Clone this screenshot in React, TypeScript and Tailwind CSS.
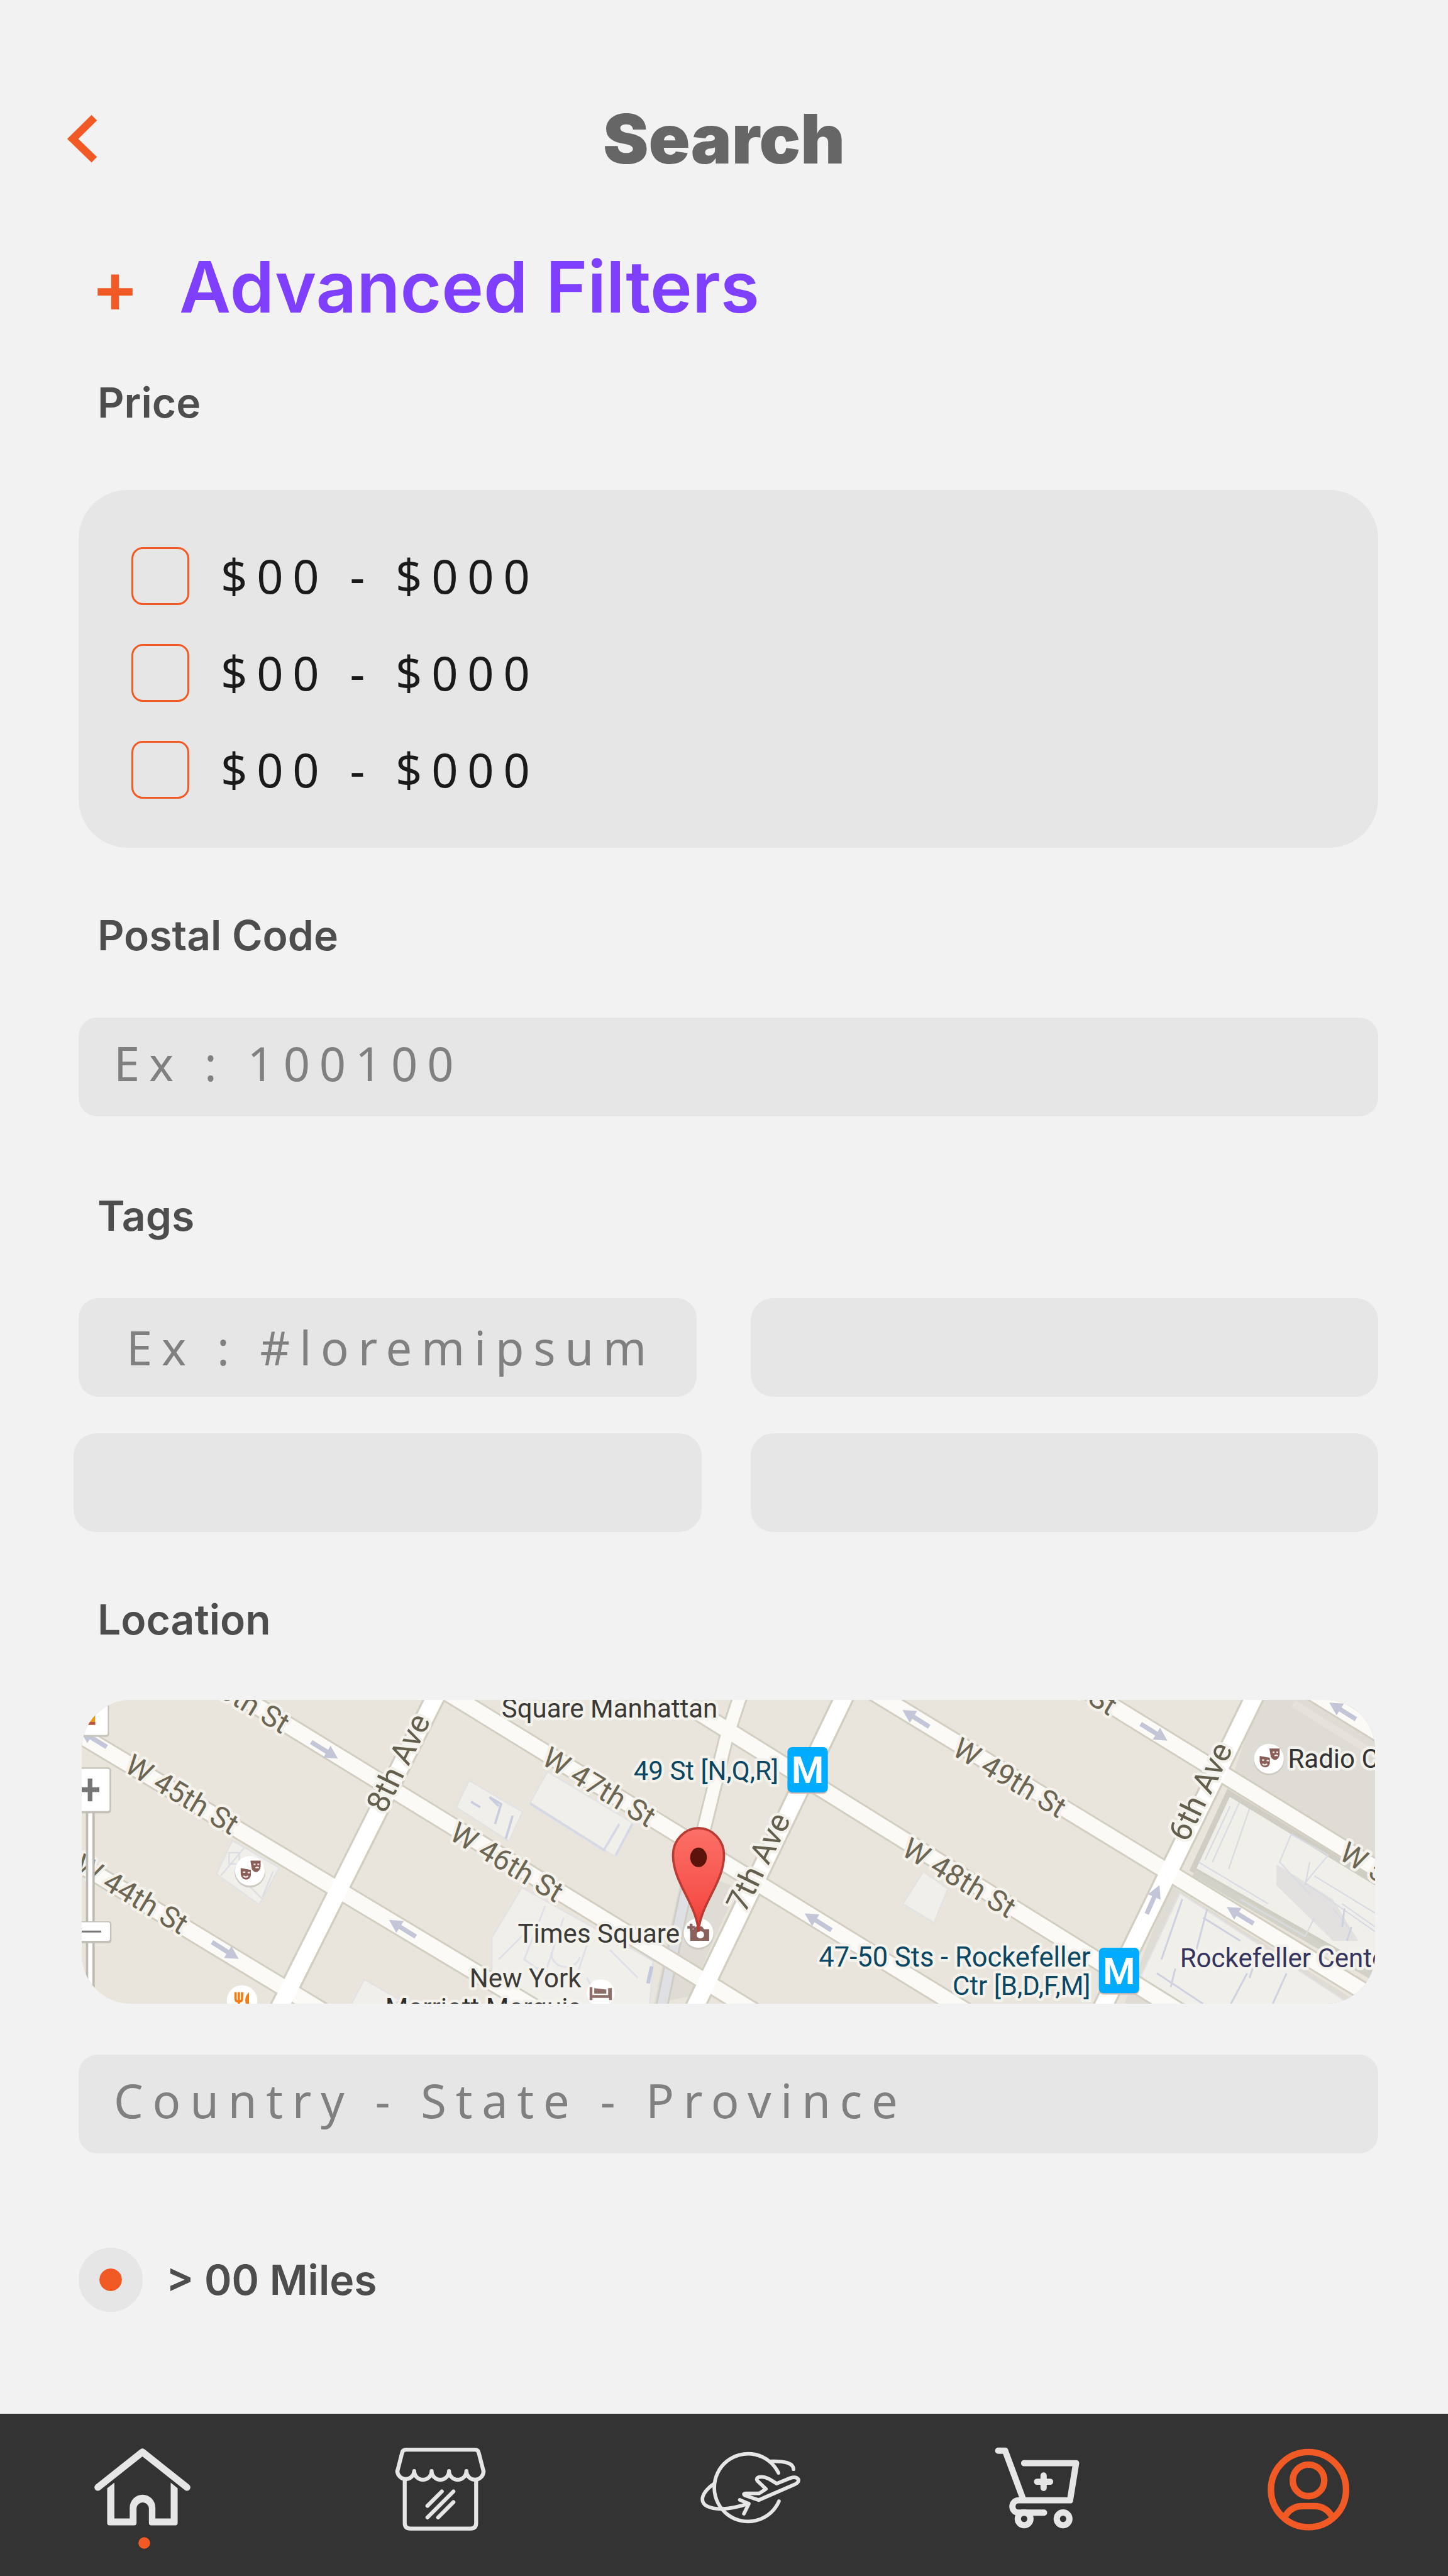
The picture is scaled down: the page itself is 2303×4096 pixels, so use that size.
import React from "react";

const heading = "font-['Inter',sans-serif]";
const body = "font-['Noto_Sans','Open_Sans',sans-serif]";
const field =
  "block h-[157px] w-full bg-[#e6e6e6] text-[74px] tracking-[0.2em] text-[#1a1a1a] placeholder:text-[#808080] placeholder:opacity-100 outline-none";

function FieldLabel({ htmlFor, children }: { htmlFor?: string; children: React.ReactNode }) {
  const cls = `${heading} block pl-[30px] text-[66px] leading-[80px] font-semibold text-[#4d4d4d]`;
  return htmlFor ? (
    <label htmlFor={htmlFor} className={cls}>
      {children}
    </label>
  ) : (
    <h3 className={cls}>{children}</h3>
  );
}

function PriceOption({ id, label }: { id: string; label: string }) {
  return (
    <div className="flex h-[92px] items-center gap-[50px]">
      <input
        id={id}
        type="checkbox"
        className="size-[92px] appearance-none rounded-[18px] border-[3px] border-[#f15a24] checked:bg-[#f15a24]"
      />
      <label htmlFor={id} className={`${body} text-[74px] leading-[92px] tracking-[0.2em] whitespace-pre text-[#1a1a1a]`}>
        {label}
      </label>
    </div>
  );
}

const streets = [
  [-20, 345, 520, 672],
  [-20, 66, 980, 666],
  [300, -34, 1460, 678],
  [780, -21, 1910, 673],
  [1240, -30, 2400, 692],
  [1680, -34, 2830, 668],
  [2140, -38, 2830, 387],
  [2620, -38, 2830, 91],
];

const avenues = [
  [770, -20, 421, 676],
  [1652, -20, 1317, 676],
  [2537, -20, 2197, 676],
];

const arrows = [
  [524, 109, 32],
  [310, 541, 32],
  [692, 493, 212],
  [25, 84, 212],
  [1800, 40, 212],
  [1589, 479, 212],
  [2314, 70, 32],
  [2500, 465, 212],
  [2721, 24, 212],
  [2312, 431, -66],
];

const streetNames = [
  { text: "W 45th St", x: 89, y: 153 },
  { text: "W 44th St", x: -20, y: 368 },
  { text: "W 46th St", x: 790, y: 299 },
  { text: "W 47th St", x: 989, y: 137 },
  { text: "W 48th St", x: 1766, y: 333 },
  { text: "W 49th St", x: 1875, y: 117 },
  { text: "W 46th St", x: 199, y: -65 },
  { text: "W 50th St", x: 1985, y: -104 },
  { text: "W 50th St", x: 2710, y: 342 },
];

const avenueNames = [
  { text: "8th Ave", x: 704, y: 146 },
  { text: "7th Ave", x: 1481, y: 360 },
  { text: "6th Ave", x: 2435, y: 208 },
];

const places = [
  { text: "Square Manhattan", x: 906, y: 38, fill: "#3c3a36" },
  { text: "Times Square", x: 941, y: 524, fill: "#3c3a36" },
  { text: "New York", x: 837, y: 621, fill: "#3c3a36" },
  { text: "Marriott Marquis", x: 655, y: 684, fill: "#2b2a27" },
  { text: "Radio City", x: 2603, y: 147, fill: "#333333" },
  { text: "49 St [N,Q,R]", x: 1191, y: 172, fill: "#0b4763" },
  { text: "Rockefeller Center", x: 2370, y: 577, fill: "#34345f" },
];

function Metro({ x, y }: { x: number; y: number }) {
  return (
    <g>
      <rect x={x} y={y + 3} width="87" height="98" rx="10" fill="#d9b9ae" />
      <rect x={x} y={y} width="87" height="98" rx="10" fill="#00acff" />
      <text x={x + 43.5} y={y + 78} textAnchor="middle" fontSize="80" fontWeight="600" fill="#fff">
        M
      </text>
    </g>
  );
}

function Masks({ x, y }: { x: number; y: number }) {
  return (
    <g transform={`translate(${x} ${y})`}>
      <circle cy="3" r="33" fill="#cfcbc2" />
      <circle r="32" fill="#fff" />
      <path d="M1-22H23V-9Q22 1 13 3Q7 2 4-4" fill="#8a5f58" />
      <path d="M-20-6L2-2V10Q0 19-9 19Q-19 17-20 6Z" fill="#8a5f58" />
      <path d="M-15 3h5m5 1h5M-14 11q5 5 10 0M8-14h4m4 0h4M12-6q4-3 7 0" stroke="#f1e9e6" strokeWidth="3" fill="none" />
    </g>
  );
}

function MapView() {
  return (
    <svg
      role="img"
      aria-label="Map of Times Square"
      viewBox="0 0 2791 656"
      preserveAspectRatio="xMidYMid slice"
      className="block h-[483px] w-full rounded-[78px] bg-[#e9e5dc] font-['Roboto',sans-serif]"
    >
      <defs>
        <linearGradient id="pin" x1="0" y1="0" x2="0" y2="1">
          <stop offset="0" stopColor="#fb7067" />
          <stop offset="0.7" stopColor="#f6504a" />
          <stop offset="1" stopColor="#e8382f" />
        </linearGradient>
      </defs>
      <rect width="2791" height="656" fill="#e9e5dc" />

      <g fill="#dfdbd5">
        <path d="M2540 0H2650L2791 90V345L2485 160Z" />
        <path d="M1345 380L1415 405L1310 640L1235 656L1290 400Z" />
        <path d="M2350 400L2760 656H2250Z" />
      </g>
      <path d="M2615 8L2791 118" stroke="#e6e2db" strokeWidth="16" />

      <g fill="#f1efea" stroke="#e2e2e4" strokeWidth="3">
        <path d="M325 304L426 362L383 442L291 376Z" />
        <path d="M836 174L951 242L922 305L808 232Z" />
        <path d="M1005 155L1188 265L1152 339L968 222Z" />
        <path d="M950 405L1234 564L1225 660H885V513Z" />
        <path d="M1816 371L1869 408L1839 481L1772 440Z" />
        <path d="M610 603L690 650L640 660H580Z" />
        <path d="M2370 417L2745 662H2345L2286 596Z" />
      </g>
      <path d="M2475 201L2810 405V600L2398 366Z" fill="#f1efea" stroke="#d0cec4" strokeWidth="12" />
      <path d="M2400 374L2800 606" stroke="#d3d2c8" strokeWidth="14" />
      <path d="M2578 355L2700 430L2755 520L2700 520L2578 400Z" fill="#e2e1df" />
      <path d="M860 232L840 220M900 230L880 210L905 225L892 268M930 250L915 300" stroke="#c9cde0" strokeWidth="5" fill="none" />
      <path d="M1188 268L1152 336M1160 268L1128 322M968 224L1130 326" stroke="#d5d8e5" strokeWidth="5" fill="none" />
      <path d="M318 330h22v24h-22zM413 370L390 425M345 385L390 430M300 380L350 320" stroke="#dcdde4" strokeWidth="3" fill="none" />
      <path
        d="M1000 445L955 560L1010 600M1040 470L1000 590M1015 545a30 26 0 1 0 60 10M960 500L900 560M1100 500L1060 620M1140 540L1200 600M1234 564L1222 610M1090 600L1120 656"
        stroke="#dfe0e8"
        strokeWidth="4"
        fill="none"
      />
      <path d="M1230 575L1222 612" stroke="#c3c8dc" strokeWidth="8" />
      <path
        d="M2520 235L2475 365M2498 222L2440 350M2478 230L2424 345M2410 350L2560 440M2610 290L2585 350L2650 420M2610 290L2690 335L2640 395L2791 500M2660 380L2791 460M2700 450L2740 500M2720 440L2791 490M2500 430L2640 510L2660 470M2640 400L2650 350"
        stroke="#d9dbe3"
        strokeWidth="3"
        fill="none"
      />
      <path
        d="M2429 450L2400 560M2375 430L2330 560M2515 590L2480 656M2360 580L2350 620M2320 590L2420 656M2450 440L2640 570M2600 590L2570 656M2420 470L2500 520M2540 540L2520 600M2725 450L2720 490M2740 490L2730 520"
        stroke="#cdd1e0"
        strokeWidth="4"
        fill="none"
      />

      <path d="M1344 265L1300 430L1252 660" stroke="#cfcdc6" strokeWidth="28" fill="none" />
      <path d="M1344 265L1300 430L1252 660" stroke="#dfe0e4" strokeWidth="20" fill="none" />

      <g stroke="#d2cec2">
        <path d="M1425-20L1390 86L1340 290" strokeWidth="34" fill="none" />
        {streets.map(([x1, y1, x2, y2], i) => (
          <line key={i} x1={x1} y1={y1} x2={x2} y2={y2} strokeWidth="41" />
        ))}
        {avenues.map(([x1, y1, x2, y2], i) => (
          <line key={i} x1={x1} y1={y1} x2={x2} y2={y2} strokeWidth="45" />
        ))}
      </g>
      <g stroke="#fbfaf7">
        <path d="M1425-20L1390 86L1340 290" strokeWidth="26" fill="none" />
        {streets.map(([x1, y1, x2, y2], i) => (
          <line key={i} x1={x1} y1={y1} x2={x2} y2={y2} strokeWidth="33" />
        ))}
      </g>
      <g stroke="#ffffff">
        {avenues.map(([x1, y1, x2, y2], i) => (
          <line key={i} x1={x1} y1={y1} x2={x2} y2={y2} strokeWidth="36" />
        ))}
      </g>

      {arrows.map(([x, y, r], i) => (
        <path
          key={i}
          d="M-34-5H6V-15L34 0L6 15V5H-34Z"
          transform={`translate(${x} ${y}) rotate(${r})`}
          fill="#c2c6d7"
        />
      ))}

      <g stroke="#f4f2ec" strokeWidth="12" strokeLinejoin="round" className="[paint-order:stroke]">
        {streetNames.map(({ text, x, y }, i) => (
          <text key={i} transform={`translate(${x} ${y}) rotate(31)`} fontSize="63" fill="#6b6552">
            {text}
          </text>
        ))}
        {avenueNames.map(({ text, x, y }) => (
          <text
            key={text}
            transform={`translate(${x} ${y}) rotate(-64)`}
            textAnchor="middle"
            fontSize="68"
            fill="#645e4c"
          >
            {text}
          </text>
        ))}
        {places.map(({ text, x, y, fill }) => (
          <text key={text} x={x} y={y} fontSize="57" fill={fill}>
            {text}
          </text>
        ))}
        <text x="2177" y="575" textAnchor="end" fontSize="59" fill="#0b4763">
          47-50 Sts - Rockefeller
        </text>
        <text x="2177" y="637" textAnchor="end" fontSize="57" fill="#0b4763">
          Ctr [B,D,F,M]
        </text>
      </g>

      <Metro x={1523} y={102} />
      <Metro x={2195} y={535} />
      <Masks x={363} y={369} />
      <Masks x={2562} y={127} />

      <circle cx="346" cy="649" r="33" fill="#fff" />
      <path d="M332 631v14q0 6 7 6v8M339 631v18M346 631v14q0 6-7 6" stroke="#f57c14" strokeWidth="5" fill="none" />
      <path d="M361 631v30h-5q-8-18 5-30z" fill="#f57c14" />

      <circle cx="1120" cy="633" r="30" fill="#fff" />
      <path d="M1096 620h6v17h34v-15h8v26h-6v-5h-36v5h-6zM1106 622l26 3v9h-26z" fill="#8d6e68" />

      <circle cx="1331" cy="506" r="33" fill="#cfcbc2" />
      <circle cx="1331" cy="503" r="32" fill="#fff" />
      <path d="M1313 495h8l4-6h14l4 6h11v25h-41z" fill="#8a625b" />
      <circle cx="1335" cy="507" r="8" fill="#fff" />
      <path d="M1315 483v16M1307 491h16" stroke="#8a625b" strokeWidth="6" />
      <path
        d="M1331 500C1327 440 1276 395 1276 335A55 58 0 0 1 1386 335C1386 395 1335 440 1331 500Z"
        fill="url(#pin)"
        stroke="#b83b34"
        strokeWidth="5"
      />
      <ellipse cx="1331" cy="340" rx="18" ry="21" fill="#5c130c" />

      <g>
        <rect x="-10" y="-10" width="69" height="90" rx="6" fill="#c9c6bd" />
        <rect x="-10" y="-10" width="66" height="86" rx="4" fill="#fff" />
        <rect x="10" y="30" width="19" height="24" fill="#e9960c" />
        <rect x="10" y="48" width="19" height="6" fill="#b8524a" />
        <rect x="9" y="240" width="19" height="420" fill="#bdbbb4" />
        <rect x="14" y="240" width="9" height="420" fill="#fff" />
        <rect x="-10" y="146" width="73" height="99" rx="6" fill="#c3c0b7" />
        <rect x="-10" y="149" width="70" height="91" rx="4" fill="#fff" />
        <path d="M0 194H38M18 170V219" stroke="#757575" strokeWidth="10" />
        <rect x="-10" y="478" width="74" height="47" rx="6" fill="#c3c0b7" />
        <rect x="-10" y="480" width="71" height="40" rx="4" fill="#fff" />
        <path d="M0 500H42" stroke="#757575" strokeWidth="4" />
      </g>
    </svg>
  );
}

const navIcon = "h-[177px] w-[177px]";

function NavLink({ label, children }: { label: string; children: React.ReactNode }) {
  return (
    <a href="#" aria-label={label} className="flex items-center justify-center">
      {children}
    </a>
  );
}

export default function App() {
  return (
    <div className="flex min-h-screen flex-col bg-[#f2f2f2]">
      <header className="grid grid-cols-[1fr_auto_1fr] items-center px-[107px] pt-[160px]">
        <button type="button" aria-label="Back" className="w-[48px]">
          <svg viewBox="145 244 66 104" className="h-[77px] w-[48px]" fill="none" stroke="#f15a24" strokeWidth="17">
            <path d="M204 250L157 296.500L204 342" />
          </svg>
        </button>
        <h1 className={`${heading} text-[109px] leading-[120px] font-black text-[#666666]`}>Search</h1>
      </header>

      <main className="flex-1 pr-[111px] pl-[125px]">
        <h2 className="mt-[120px] pl-[20px]">
          <button
            type="button"
            className={`${heading} flex items-center gap-[64px] text-[113px] leading-[112px] font-semibold text-[#7f3fff]`}
          >
            <span className="text-[#f15a24]">+</span>
            <span>Advanced Filters</span>
          </button>
        </h2>

        <section className="mt-[88px]">
          <FieldLabel>Price</FieldLabel>
          <div className="mt-[99px] flex flex-col gap-[62px] rounded-[78px] bg-[#e6e6e6] pt-[91px] pb-[78px] pl-[84px]">
            <PriceOption id="price-1" label="$00 - $000" />
            <PriceOption id="price-2" label="$00 - $000" />
            <PriceOption id="price-3" label="$00 - $000" />
          </div>
        </section>

        <section className="mt-[99px]">
          <FieldLabel htmlFor="postal">Postal Code</FieldLabel>
          <input
            id="postal"
            type="text"
            placeholder="Ex : 100100"
            className={`${field} ${body} mt-[91px] rounded-[30px] px-[56px] pb-[12px]`}
          />
        </section>

        <section className="mt-[118px]">
          <FieldLabel htmlFor="tag-1">Tags</FieldLabel>
          <div className="mt-[91px] -ml-[8px] grid grid-cols-2 gap-x-[78px] gap-y-[58px]">
            <div className="px-[8px]">
              <input
                id="tag-1"
                type="text"
                placeholder="Ex : #loremipsum"
                className={`${field} ${body} rounded-[32px] pl-[76px]`}
              />
            </div>
            <input type="text" aria-label="Tag 2" className={`${field} ${body} rounded-[36px] px-[56px]`} />
            <input type="text" aria-label="Tag 3" className={`${field} ${body} rounded-[36px] px-[56px]`} />
            <input type="text" aria-label="Tag 4" className={`${field} ${body} rounded-[36px] px-[56px]`} />
          </div>
        </section>

        <section className="mt-[99px]">
          <FieldLabel htmlFor="region">Location</FieldLabel>
          <div className="mt-[88px] px-[5px]">
            <MapView />
          </div>
          <input
            id="region"
            type="text"
            placeholder="Country - State - Province"
            className={`${field} ${body} mt-[81px] rounded-[30px] px-[56px] pb-[12px]`}
          />
          <div className="mt-[150px] flex items-center gap-[37px]">
            <input
              id="miles"
              type="radio"
              name="distance"
              defaultChecked
              className="size-[102px] appearance-none rounded-full border-[33px] border-[#e6e6e6] bg-clip-padding checked:bg-[#f15a24]"
            />
            <label htmlFor="miles" className={`${heading} text-[66px] leading-[80px] font-semibold text-[#4d4d4d]`}>
              &gt; 00 Miles
            </label>
          </div>
        </section>
      </main>

      <nav
        aria-label="Main"
        className="grid h-[258px] grid-cols-[452fr_496fr_490fr_422fr_443fr] items-center bg-[#333333]"
      >
        <NavLink label="Home">
          <svg viewBox="187 5264 240 240" className={navIcon}>
            <path
              d="M211 5367L307 5291L403 5367"
              fill="none"
              stroke="#e6e6e6"
              strokeWidth="15"
              strokeLinecap="round"
              strokeLinejoin="round"
            />
            <path
              d="M231 5369L246.600 5357V5434H279.600V5411a27.700 28 0 0 1 55.400 0V5434H368V5357L383 5369V5444q0 5-5 5H326q-5 0-5-5V5412a13.400 13.400 0 0 0-26.700 0V5444q0 5-5 5H236q-5 0-5-5z"
              fill="#e6e6e6"
            />
            <circle cx="311" cy="5487" r="12.500" fill="#f15a24" />
          </svg>
        </NavLink>
        <NavLink label="Shop">
          <svg
            viewBox="830 5264 240 240"
            className={navIcon}
            fill="none"
            stroke="#e6e6e6"
            strokeWidth="8.5"
            strokeLinecap="round"
            strokeLinejoin="round"
          >
            <path d="M857 5333L867.500 5292Q869 5286 876 5286H1024Q1031 5286 1032.500 5292L1043 5333" />
            <path d="M857 5332A18.300 18.600 0 0 0 893.500 5332A18.700 18.600 0 0 0 931 5332A18.700 18.600 0 0 0 968.500 5332A18.700 18.600 0 0 0 1006 5332A18.500 18.600 0 0 0 1043 5332" />
            <path d="M873 5353V5444Q873 5456 885 5456H1015Q1027 5456 1027 5444V5353" />
            <path d="M953 5376L922 5407M978 5376L922 5432M978 5399L945 5432" />
          </svg>
        </NavLink>
        <NavLink label="Travel">
          <svg
            viewBox="1499 5264 240 240"
            className={navIcon}
            fill="none"
            stroke="#e6e6e6"
            strokeWidth="7.8"
            strokeLinecap="round"
            strokeLinejoin="round"
          >
            <path d="M1680.600 5397A72.800 73 0 1 1 1679.500 5336" />
            <path d="M1664 5311C1692 5310 1712 5315 1712 5328" />
            <path d="M1541 5359C1526 5369 1515.500 5382 1515.500 5393C1515.500 5406 1531 5413.500 1555 5413.500C1578 5413 1598 5408 1615 5402" />
            <path d="M1596 5394L1615.500 5402.500L1605 5424" />
            <path d="M1637 5394.500L1716 5360Q1724 5356 1722.500 5350Q1718 5343 1705 5347L1675.500 5359L1660 5349.500Q1645 5341.500 1635 5346Q1631 5349 1634 5353L1652.500 5370.500L1638 5380L1609 5380Q1602 5381 1607 5384.500Z" />
          </svg>
        </NavLink>
        <NavLink label="Cart">
          <svg
            viewBox="2118 5264 240 240"
            className={navIcon}
            fill="none"
            stroke="#e6e6e6"
            strokeWidth="13.5"
            strokeLinecap="round"
            strokeLinejoin="round"
          >
            <path d="M2154 5288H2169L2208 5393" />
            <path d="M2210 5315H2322L2309 5395H2197A13.400 13.400 0 0 0 2197 5421.700H2253" />
            <circle cx="2210" cy="5435" r="13.700" />
            <circle cx="2294" cy="5435" r="13.700" />
            <path d="M2238 5355H2266M2252 5341.500V5368.500" />
          </svg>
        </NavLink>
        <NavLink label="Profile">
          <svg viewBox="2706 5264 240 240" className={navIcon} fill="none" stroke="#f15a24" strokeWidth="14">
            <circle cx="2825.500" cy="5372" r="81" />
            <circle cx="2825.500" cy="5352" r="34" />
            <path d="M2776 5428C2784 5415 2797 5407.500 2813 5407.500H2838C2854 5407.500 2867 5415 2875 5428" />
          </svg>
        </NavLink>
      </nav>
    </div>
  );
}
